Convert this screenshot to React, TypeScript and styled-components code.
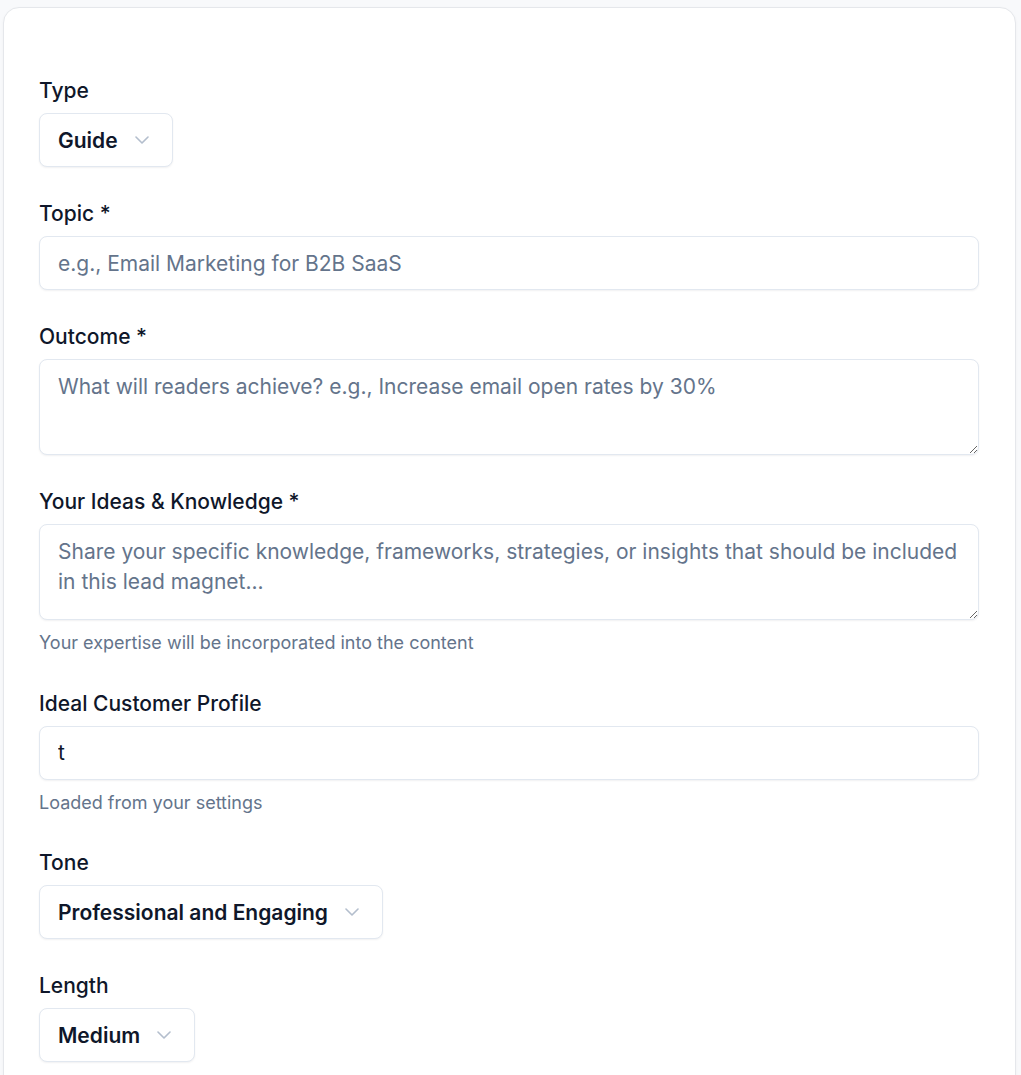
import styled, { createGlobalStyle } from "styled-components";
import { ChevronDown } from "lucide-react";

const GlobalStyle = createGlobalStyle`
    body {
        margin: 0;
        background: #f8f9fb;
        font-family: Inter, "Noto Sans", sans-serif;
        color: #0f172a;
    }
`

const Page = styled.div`
    padding: 7px 5px 0 3px;
`

const Card = styled.div`
    background: #fff;
    border: 1px solid #e5e7eb;
    border-radius: 16px;
    box-shadow: 0 1px 3px rgba(15, 23, 42, 0.04);
    padding: 69px 36px 40px 35px;
    display: flex;
    flex-direction: column;
    gap: 33px;
`

const Field = styled.div`
    display: flex;
    flex-direction: column;
    gap: 8px;
    align-items: flex-start;
`

const Label = styled.label`
    font-size: 21px;
    line-height: 28px;
    font-weight: 500;
    color: #0f172a;
`

const inputBase = `
    box-sizing: border-box;
    width: 100%;
    border: 1px solid #e2e8f0;
    border-radius: 8px;
    background: #fff;
    box-shadow: 0 1px 2px rgba(15, 23, 42, 0.06);
    font-family: Inter, "Noto Sans", sans-serif;
    font-size: 21px;
    color: #0f172a;
    padding: 0 18px;
    outline: none;

    &::placeholder {
        color: #64748b;
        opacity: 1;
    }
`

const TextInput = styled.input`
    ${inputBase}
    height: 54px;
`

const TextArea = styled.textarea`
    ${inputBase}
    height: 96px;
    padding: 12px 18px;
    line-height: 30px;
    resize: vertical;
    display: block;
`

const Hint = styled.p`
    margin: 2px 0 0;
    font-size: 18px;
    line-height: 26.5px;
    color: #64748b;
`

const SelectButton = styled.button`
    display: flex;
    align-items: center;
    gap: 12px;
    height: 54px;
    padding: 0 18px 0 18px;
    border: 1px solid #e2e8f0;
    border-radius: 8px;
    background: #fff;
    box-shadow: 0 1px 2px rgba(15, 23, 42, 0.06);
    font-family: Inter, "Noto Sans", sans-serif;
    font-size: 21px;
    font-weight: 600;
    color: #0f172a;
    cursor: pointer;

    svg {
        color: #94a3b8;
        opacity: 0.7;
    }
`

interface SelectProps {
  label: string;
  value: string;
}

function SelectField(props: SelectProps) {
  return (
    <Field>
      <Label>{props.label}</Label>
      <SelectButton type="button">
        {props.value}
        <ChevronDown size={24} strokeWidth={1.6} />
      </SelectButton>
    </Field>
  )
}

export default function App() {
    return (
        <Page>
            <GlobalStyle />
            <Card>
                <SelectField label="Type" value="Guide" />
                <Field>
                    <Label>Topic *</Label>
                    <TextInput placeholder="e.g., Email Marketing for B2B SaaS" />
                </Field>
                <Field>
                    <Label>Outcome *</Label>
                    <TextArea placeholder="What will readers achieve? e.g., Increase email open rates by 30%" />
                </Field>
                <Field>
                    <Label>Your Ideas &amp; Knowledge *</Label>
                    <TextArea placeholder="Share your specific knowledge, frameworks, strategies, or insights that should be included in this lead magnet..." />
                    <Hint>Your expertise will be incorporated into the content</Hint>
                </Field>
                <Field>
                    <Label>Ideal Customer Profile</Label>
                    <TextInput defaultValue="t" />
                    <Hint>Loaded from your settings</Hint>
                </Field>
                <SelectField label="Tone" value="Professional and Engaging" />
                <SelectField label="Length" value="Medium" />
            </Card>
        </Page>
    )
}
